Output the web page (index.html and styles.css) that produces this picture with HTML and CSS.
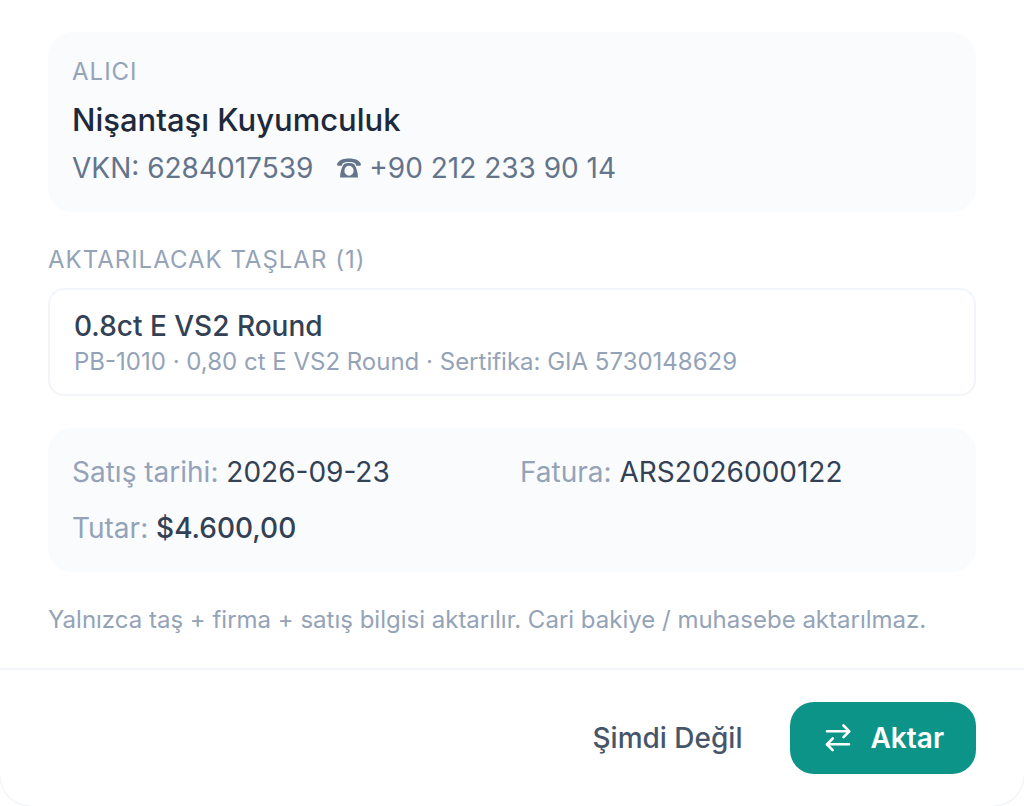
FILE: index.html
```html
<!DOCTYPE html>
<html lang="tr">
  <head>
    <meta charset="UTF-8" />
    <meta name="viewport" content="width=device-width, initial-scale=1.0" />
    <title>Satış Aktarımı</title>
    <link rel="stylesheet" href="styles.css">
  </head>
  <body>
    <div class="modal">
      <div class="modal-body">
        <div class="card buyer">
          <p class="label">ALICI</p>
          <h1 class="buyer-name">Nişantaşı Kuyumculuk</h1>
          <div class="buyer-info">
            <span>VKN: 6284017539</span>
            <span class="phone">
              <svg class="phone-icon" viewBox="0 0 24 20" aria-hidden="true">
                <path d="M0 6.500C1 2.500 5.500.500 12 .500s11 2 12 6l-.600 1.200h-4.200l-.8-2.200C16.500 4.300 14.500 4 12 4s-4.500.300-6.400 1.500l-.8 2.200H.600z" />
                <path fill-rule="evenodd" d="M6.800 6.200C8 5.400 10 5 12 5s4 .4 5.200 1.200c2 3 3.600 7.500 3.800 13.300H3C3.200 13.700 4.800 9.200 6.800 6.200zM12 7.700a4.600 5 0 1 0 0 10a4.600 5 0 1 0 0-10z" />
              </svg>
              +90 212 233 90 14
            </span>
          </div>
        </div>

        <div class="stones">
          <h2 class="label">AKTARILACAK TAŞLAR (1)</h2>
          <div class="stone">
            <p class="stone-title">0.8ct E VS2 Round</p>
            <p class="small">PB-1010 · 0,80 ct E VS2 Round · Sertifika: GIA 5730148629</p>
          </div>
        </div>

        <div class="card sale">
          <div><span class="key">Satış tarihi:</span> 2026-09-23</div>
          <div><span class="key">Fatura:</span> ARS2026000122</div>
          <div><span class="key">Tutar:</span> <strong>$4.600,00</strong></div>
        </div>

        <p class="small">Yalnızca taş + firma + satış bilgisi aktarılır. Cari bakiye / muhasebe aktarılmaz.</p>
      </div>

      <div class="modal-footer">
        <button type="button" class="btn">Şimdi Değil</button>
        <button type="button" class="btn btn-primary">
          <svg class="btn-icon" viewBox="0 0 32 32" aria-hidden="true">
            <path d="M5 9.300h22M21.500 3.500l5.800 5.800-5.800 5.800M27 22.300H5M10.700 16.500l-5.800 5.800 5.800 5.800" />
          </svg>
          Aktar
        </button>
      </div>
    </div>
  </body>
</html>
```
FILE: styles.css
```css
* {
  box-sizing: border-box;
}

body {
  margin: 0;
  font-family: Inter, "Liberation Sans", sans-serif;
  font-size: 28px;
  line-height: 40px;
  color: #334155;
  background-color: #fff;
}

p,
h1,
h2 {
  margin: 0;
}

.modal {
  background-color: #fff;
  border-radius: 0 0 32px 32px;
  box-shadow: 0 0 2px #cbd5e1;
}

.modal-body {
  display: flex;
  flex-direction: column;
  gap: 32px;
  padding: 32px 48px;
}

.card {
  padding: 24px;
  border-radius: 24px;
  background-color: #f9fbfd;
}

.label {
  font-size: 24px;
  font-weight: 400;
  line-height: 32px;
  letter-spacing: 1px;
  color: #94a3b8;
}

.buyer-name {
  margin: 8px 0 4px;
  font-size: 31px;
  font-weight: 500;
  line-height: 48px;
  color: #1e293b;
}

.buyer-info {
  display: flex;
  flex-wrap: wrap;
  column-gap: 24px;
  color: #64748b;
}

.phone {
  display: flex;
  align-items: center;
  gap: 8px;
}

.phone-icon {
  width: 24px;
  height: 20px;
  fill: currentColor;
}

.stones {
  display: flex;
  flex-direction: column;
  gap: 12px;
}

.stone {
  padding: 16px 24px;
  border: 2px solid #f1f5f9;
  border-radius: 16px;
}

.stone-title {
  font-weight: 500;
}

.small {
  font-size: 24px;
  line-height: 32px;
  color: #94a3b8;
}

.sale {
  display: grid;
  grid-template-columns: 1fr 1fr;
  gap: 16px;
}

.sale strong {
  font-weight: 500;
}

.key {
  color: #94a3b8;
}

.modal-footer {
  display: flex;
  justify-content: flex-end;
  gap: 16px;
  padding: 32px 48px;
  border-top: 2px solid #f1f5f9;
}

.btn {
  display: flex;
  align-items: center;
  gap: 16px;
  padding: 16px 32px;
  border: none;
  border-radius: 24px;
  background: none;
  font: inherit;
  font-weight: 500;
  color: #475569;
  cursor: pointer;
}

.btn-primary {
  background-color: #0d9488;
  font-weight: 600;
  color: #fff;
}

.btn-icon {
  width: 32px;
  height: 32px;
  fill: none;
  stroke: currentColor;
  stroke-width: 2.6;
  stroke-linecap: round;
  stroke-linejoin: round;
}
```
